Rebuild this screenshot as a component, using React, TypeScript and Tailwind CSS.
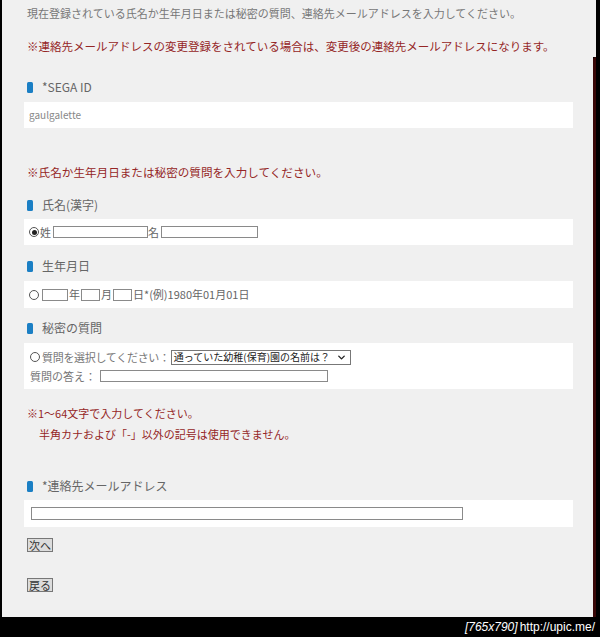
import { ChevronDown } from "lucide-react";

const font = { fontFamily: '"Noto Sans CJK JP", "Noto Sans", sans-serif' };

function Header({ label, className }: { label: string; className: string }) {
  return (
    <div className={`flex h-[20px] items-center pl-[3px] ${className}`}>
      <span className="h-[11px] w-[6px] rounded-[1.5px] bg-[#1b7fc4]" />
      <span className="ml-[9px] text-[12px] text-[#666]">{label}</span>
    </div>
  );
}

function Box({ className, children }: { className: string; children: React.ReactNode }) {
  return <div className={`mr-[20px] bg-white ${className}`}>{children}</div>;
}

function Field({ w }: { w: string }) {
  return <span className={`inline-block h-[12px] border border-[#8a8a8a] bg-white ${w}`} />;
}

function Radio({ checked }: { checked?: boolean }) {
  return (
    <span className="flex h-[10px] w-[10px] items-center justify-center rounded-full border border-[#555]">
      {checked && <span className="h-[5px] w-[5px] rounded-full bg-[#222]" />}
    </span>
  );
}

export default function App() {
  return (
    <div className="flex h-[637px] w-[600px] flex-col bg-black" style={font}>
      <div className="flex h-[617px]">
        <div className="ml-[2px] w-[591px] bg-[#f0f0f0] pl-[22px] text-[11px] leading-none">
          <div className="flex h-[26px] items-center pl-[3px] text-[#777]">
            現在登録されている氏名か生年月日または秘密の質問、連絡先メールアドレスを入力してください。
          </div>
          <div className="mt-[8px] flex h-[26px] items-center pl-[3px] text-[11.5px] text-[#952626]">
            ※連絡先メールアドレスの変更登録をされている場合は、変更後の連絡先メールアドレスになります。
          </div>

          <Header label="*SEGA ID" className="mt-[17px]" />
          <Box className="mt-[5px] flex h-[26px] items-center pl-[5px]">
            <span className="text-[10px] text-[#888]">gaulgalette</span>
          </Box>

          <div className="mt-[35px] flex h-[20px] items-center pl-[3px] text-[11.6px] text-[#952626]">
            ※氏名か生年月日または秘密の質問を入力してください。
          </div>

          <Header label="氏名(漢字)" className="mt-[12px]" />
          <Box className="mt-[4px] flex h-[26px] items-center pl-[5px] text-[#666]">
            <Radio checked />
            <span className="ml-[1px]">姓</span>
            <Field w="ml-[2px] w-[95px]" />
            <span>名</span>
            <Field w="ml-[2px] w-[97px]" />
          </Box>

          <Header label="生年月日" className="mt-[11px]" />
          <Box className="mt-[5px] flex h-[27px] items-center pl-[5px] text-[#666]">
            <Radio />
            <Field w="ml-[3px] w-[26px]" />
            <span className="ml-[1px]">年</span>
            <Field w="ml-[1px] w-[19px]" />
            <span className="ml-[1px]">月</span>
            <Field w="ml-[1px] w-[19px]" />
            <span className="ml-[1px]">日*(例)1980年01月01日</span>
          </Box>

          <Header label="秘密の質問" className="mt-[10px]" />
          <Box className="mt-[5px] flex h-[46px] flex-col justify-center gap-[5px] pl-[6px] text-[#777]">
            <div className="flex h-[15px] items-center whitespace-nowrap">
              <Radio />
              <span className="ml-[2px] tracking-[-0.3px]">質問を選択してください：</span>
              <span className="ml-[1px] flex h-[15px] w-[180px] items-center whitespace-nowrap border border-[#777] bg-white pl-[2px] text-[10px] text-[#222]">
                通っていた幼稚(保育)園の名前は？
                <ChevronDown className="ml-auto mr-[3px] h-[11px] w-[11px]" strokeWidth={3} />
              </span>
            </div>
            <div className="flex h-[13px] items-center">
              <span>質問の答え：</span>
              <Field w="ml-[4px] w-[228px]" />
            </div>
          </Box>

          <div className="mt-[14px] flex h-[20px] items-center pl-[3px] text-[11px] text-[#952626]">
            ※1～64文字で入力してください。
          </div>
          <div className="mt-[1px] flex h-[20px] items-center pl-[15px] text-[11px] text-[#952626]">
            半角カナおよび「-」以外の記号は使用できません。
          </div>

          <Header label="*連絡先メールアドレス" className="mt-[32px]" />
          <Box className="mt-[4px] flex h-[27px] items-center pl-[7px]">
            <Field w="w-[432px] h-[13px]" />
          </Box>

          <div className="mt-[11px] flex h-[14px] items-center pl-[3px]">
            <span className="flex h-[14px] items-center border border-[#777] bg-[#dcdcdc] px-[1px] text-[11px] text-[#333]">
              次へ
            </span>
          </div>
          <div className="mt-[26px] flex h-[14px] items-center pl-[3px]">
            <span className="flex h-[14px] items-center border border-[#777] bg-[#dcdcdc] px-[1px] text-[11px] text-[#333]">
              戻る
            </span>
          </div>
        </div>
        <div className="flex w-[3px] flex-col">
          <div className="h-[57px] bg-[#f0f0f0]" />
          <div className="flex-1 rounded-tl-[3px] bg-[#3a0808]" />
        </div>
      </div>
      <div className="flex h-[20px] items-center justify-end pr-[5px] text-[12px] text-white">
        <span className="italic" style={{ fontFamily: '"Liberation Sans", sans-serif' }}>
          [765x790]
        </span>
        <span style={{ fontFamily: '"Liberation Sans", sans-serif' }} className="ml-[2px] text-[12px]">
          http://upic.me/
        </span>
      </div>
    </div>
  );
}
